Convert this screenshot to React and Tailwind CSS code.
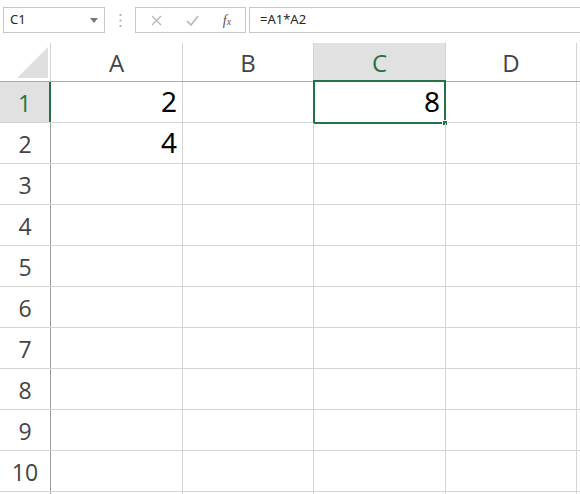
import React from 'react';

const cols = [
  { label: 'A', w: 'w-[132px]' },
  { label: 'B', w: 'w-[131px]' },
  { label: 'C', w: 'w-[132px]', selected: true },
  { label: 'D', w: 'w-[131px]' },
];

const values = { '1-A': '2', '2-A': '4', '1-C': '8' };

function Toolbar() {
  return (
    <div className="flex h-[43px] items-start pt-[7px] pl-[3px] text-[13px] text-[#262626]">
      {/* Name box */}
      <div className="flex h-[26px] w-[102px] items-center justify-between border border-[#c6c6c6] pl-[6px] pr-[6px]">
        <span>C1</span>
        <svg width="8" height="5" viewBox="0 0 8 5">
          <path d="M0 0h8L4 5z" fill="#7a7a7a" />
        </svg>
      </div>
      {/* Grip */}
      <div className="flex h-[26px] w-[30px] items-center justify-center">
        <svg width="3" height="13" viewBox="0 0 3 13">
          <rect x="0.5" y="0" width="2" height="2" fill="#b5b5b5" />
          <rect x="0.5" y="5.5" width="2" height="2" fill="#b5b5b5" />
          <rect x="0.5" y="11" width="2" height="2" fill="#b5b5b5" />
        </svg>
      </div>
      {/* Cancel / enter / function */}
      <div className="flex h-[26px] w-[111px] items-center border border-[#c6c6c6]">
        <div className="flex w-[38px] justify-center pl-[2px]">
          <svg width="11" height="11" viewBox="0 0 11 11">
            <path d="M1 1l9 9M10 1l-9 9" stroke="#b8b8b8" strokeWidth="1.3" />
          </svg>
        </div>
        <div className="flex w-[36px] justify-center">
          <svg width="13" height="11" viewBox="0 0 13 11">
            <path d="M1 6l4 4 7-9" stroke="#b8b8b8" strokeWidth="1.6" fill="none" />
          </svg>
        </div>
        <div className="flex w-[34px] justify-center">
          <span className="font-['Liberation_Serif',serif] text-[14px] italic text-[#555]">
            f<span className="text-[10px]">x</span>
          </span>
        </div>
      </div>
      {/* Formula bar */}
      <div className="ml-[3px] flex h-[26px] flex-1 items-center border border-r-0 border-[#c6c6c6] pl-[10px]">
        =A1*A2
      </div>
    </div>
  );
}

export default function App() {
  const rows = Array.from({ length: 10 }, (_, i) => i + 1);

  return (
    <div className="h-[494px] w-[580px] overflow-hidden bg-white font-['Noto_Sans','Open_Sans',sans-serif]">
      <Toolbar />

      {/* Column headers */}
      <div className="flex h-[39px] border-b border-[#ababab]">
        <div className="relative w-[51px] border-r border-[#d4d4d4]">
          <svg className="absolute left-[17px] top-[4px]" width="31" height="31" viewBox="0 0 31 31">
            <path d="M31 0V31H0z" fill="#dfdfdf" />
          </svg>
        </div>
        {cols.map((c) => (
          <div
            key={c.label}
            className={`${c.w} flex items-center justify-center border-r border-[#d4d4d4] pt-[2px] text-[24px] font-['Open_Sans',sans-serif] ${
              c.selected ? 'bg-[#e1e1e1] text-[#217346]' : 'text-[#444]'
            }`}
          >
            {c.label}
          </div>
        ))}
      </div>

      {/* Rows */}
      {rows.map((r) => (
        <div key={r} className="flex h-[41px] border-b border-[#d4d4d4]">
          <div
            className={`flex w-[51px] items-center justify-center pt-[2px] text-[23px] font-['Open_Sans',sans-serif] ${
              r === 1
                ? 'border-r-2 border-[#217346] bg-[#e1e1e1] text-[#217346]'
                : 'border-r border-[#9b9b9b] text-[#444]'
            }`}
          >
            {r}
          </div>
          {cols.map((c) => {
            const key = `${r}-${c.label}`;
            const sel = r === 1 && c.selected;
            return (
              <div
                key={key}
                className={`${c.w} relative flex items-end justify-end border-r border-[#d4d4d4] pb-[2px] pr-[5px] text-[28px] leading-[38px] text-black`}
              >
                {values[key]}
                {sel && (
                  <>
                    <div className="absolute -left-[1px] -top-[2px] bottom-[-2px] right-[-1px] border-2 border-[#217346]" />
                    <div className="absolute bottom-[-4px] right-[-3px] h-[6px] w-[6px] border border-white bg-[#217346]" />
                  </>
                )}
              </div>
            );
          })}
        </div>
      ))}

      {/* Partially visible next row */}
      <div className="flex h-[10px]">
        <div className="w-[51px] border-r border-[#9b9b9b]" />
        {cols.map((c) => (
          <div key={c.label} className={`${c.w} border-r border-[#d4d4d4]`} />
        ))}
      </div>
    </div>
  );
}
